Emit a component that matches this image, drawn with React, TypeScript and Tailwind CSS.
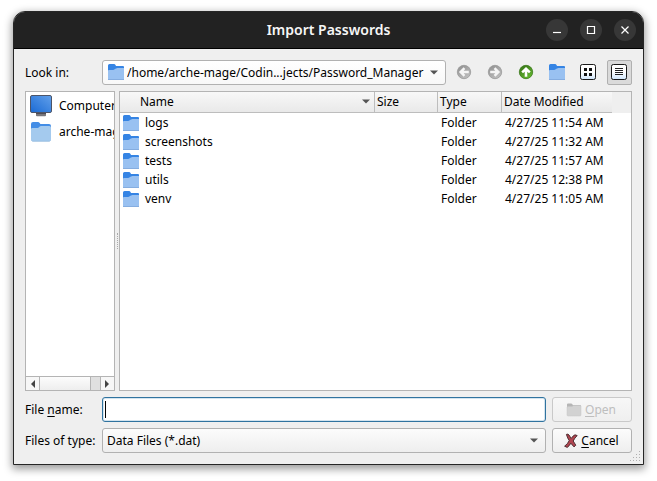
import React from "react";

const files = [
  { name: "logs", type: "Folder", date: "4/27/25 11:54 AM" },
  { name: "screenshots", type: "Folder", date: "4/27/25 11:32 AM" },
  { name: "tests", type: "Folder", date: "4/27/25 11:57 AM" },
  { name: "utils", type: "Folder", date: "4/27/25 12:38 PM" },
  { name: "venv", type: "Folder", date: "4/27/25 11:05 AM" },
];

function FolderIcon({ className = "" }: { className?: string }) {
  return (
    <svg className={`h-4 w-4 shrink-0 ${className}`} viewBox="0 0 16 16" aria-hidden="true">
      <path d="M0 1.5Q0 0 1.5 0H6Q7 0 7.5 1L8 2H15Q16 2 16 3V9H0Z" fill="#3584e4" />
      <path d="M0 6.5Q0 6 1 6H5Q6 6 7 5L8 4.4Q8.5 4 9.5 4H16V16H0Z" fill="#99c1f1" />
      <path d="M0 15.5H16" stroke="#85ade0" />
    </svg>
  );
}

function PlaceFolderIcon() {
  return (
    <svg className="h-[22px] w-[22px] shrink-0" viewBox="0 0 22 22" aria-hidden="true">
      <path d="M1 3Q1 1 3 1H8Q9 1 9.7 2L10.4 3H19Q21 3 21 5V12H1Z" fill="#438de6" />
      <path d="M1 8Q1 7 2.3 7H7.5Q8.5 7 9.2 6.1Q10 5 11 5H19.5Q21 5 21 6.5V18.5Q21 20 19.5 20H2.5Q1 20 1 18.5Z" fill="#a4caee" />
      <path d="M1.5 19.5Q2 20.3 3 20.3H19Q20 20.3 20.5 19.5" fill="none" stroke="#8ab5dc" strokeWidth="0.8" />
    </svg>
  );
}

function ComputerIcon() {
  return (
    <svg className="h-[22px] w-[22px] shrink-0" viewBox="0 0 22 22" aria-hidden="true">
      <defs>
        <linearGradient id="screen" x1="1" y1="0" x2="0" y2="1">
          <stop offset="0" stopColor="#62a0ea" />
          <stop offset="1" stopColor="#1a6ad4" />
        </linearGradient>
      </defs>
      <path d="M6 17.5H16V20.5Q16 21.2 15 21.2H7Q6 21.2 6 20.5Z" fill="#77767b" />
      <path d="M6 17.5H16V19H6Z" fill="#4f4c55" />
      <rect x="0.5" y="0.5" width="21" height="17" rx="1.5" fill="url(#screen)" stroke="#4c5468" />
    </svg>
  );
}

function ArrowIcon({ dir, green = false }: { dir: "left" | "right" | "up"; green?: boolean }) {
  const turn = dir === "left" ? 0 : dir === "up" ? 90 : 180;
  const id = `ball-${dir}`;
  return (
    <svg className="h-4 w-4" viewBox="0 0 16 16" aria-hidden="true">
      <defs>
        <linearGradient id={id} x1="0" y1="0" x2="0.6" y2="1">
          <stop offset="0" stopColor={green ? "#346f16" : "#8d8d8d"} />
          <stop offset="1" stopColor={green ? "#62b52e" : "#bdbdbd"} />
        </linearGradient>
      </defs>
      <circle cx="8" cy="8" r="6.7" fill={`url(#${id})`} stroke={green ? "#3b7a1c" : "#999"} strokeWidth="0.8" />
      <path
        d="M2.9 8L7.6 3.3L9.3 5L7.7 6.7H12.8V9.3H7.7L9.3 11L7.6 12.7Z"
        fill={green ? "#fff" : "#f5f5f5"}
        transform={`rotate(${turn} 8 8)`}
      />
    </svg>
  );
}

function ViewIcon({ kind }: { kind: "list" | "detail" }) {
  const id = `view-${kind}`;
  return (
    <svg className="h-4 w-4" viewBox="0 0 16 16" aria-hidden="true">
      <defs>
        <linearGradient id={id} x1="0" y1="0" x2="0" y2="1">
          <stop offset="0.5" stopColor="#fff" />
          <stop offset="1" stopColor="#cfe5fb" />
        </linearGradient>
      </defs>
      <rect x="0.5" y="0.5" width="15" height="15" rx="1.8" fill={`url(#${id})`} stroke="#1a1a1a" />
      {kind === "list" ? (
        <path d="M4 4H7V7H4ZM9 4H12V7H9ZM4 9H7V12H4ZM9 9H12V12H9Z" fill="#111" />
      ) : (
        <path d="M4 4.5H12M4 6.5H12M4 8.5H12M4 10.5H12" stroke="#222" />
      )}
    </svg>
  );
}

function DownTriangle({ className = "" }: { className?: string }) {
  return (
    <svg className={`h-[5px] w-2 ${className}`} viewBox="0 0 8 5" aria-hidden="true">
      <path d="M0 0.5H8L4 4.5Z" fill="#555" />
    </svg>
  );
}

function ToolButton({ label, active = false, children }: { label: string; active?: boolean; children: React.ReactNode }) {
  return (
    <button
      type="button"
      aria-label={label}
      className={`flex h-[25px] w-[25px] items-center justify-start rounded-[2px] border pb-px pl-[3px] ${
        active ? "border-[#b0b0b0] bg-[#dadada]" : "border-transparent"
      }`}
    >
      {children}
    </button>
  );
}

function WindowButton({ label, d }: { label: string; d: string }) {
  return (
    <button type="button" aria-label={label} className="h-[22px] w-[22px] rounded-full bg-[#373737]">
      <svg className="h-[22px] w-[22px]" viewBox="0 0 22 22" aria-hidden="true">
        <path d={d} fill="none" stroke="#fff" strokeWidth="1.2" />
      </svg>
    </button>
  );
}

const field = "h-[25px] w-full appearance-none rounded-[3px] border";
const raised = "border-[#b1b1b1] bg-linear-to-b from-[#fcfcfc] to-[#eee]";
const head = "border-b border-[#bdbdbd] bg-linear-to-b from-[#f8f8f8] to-[#e9e9e9] p-0 text-left font-normal";

export default function App() {
  return (
    <div className="flex min-h-screen flex-col bg-white px-[13px] pt-[11px] pb-4 font-['Noto_Sans',sans-serif] text-[12px] leading-4 text-black">
      <main className="flex flex-1 flex-col rounded-t-[12px] border border-[#262626] bg-[#efefef] shadow-[0_3px_9px_1px_rgba(0,0,0,0.4)]">
        <header className="grid h-[37px] grid-cols-[1fr_auto_1fr] items-center rounded-t-[11px] border-b border-black bg-[#222] px-[7px]">
          <h1 className="col-start-2 text-[14px] leading-5 font-semibold text-[#f6f6f6]">Import Passwords</h1>
          <div className="flex justify-end gap-3">
            <WindowButton label="Minimize" d="M7 13.5H15" />
            <WindowButton label="Maximize" d="M7.5 7.5H14.5V14.5H7.5Z" />
            <WindowButton label="Close" d="M7.5 7.5L14.5 14.5M14.5 7.5L7.5 14.5" />
          </div>
        </header>

        <form className="relative flex flex-1 flex-col gap-1.5 p-[11px]" onSubmit={(e) => e.preventDefault()}>
          <div className="flex items-center gap-1.5">
            <label htmlFor="look" className="w-[71px] shrink-0">Look in:</label>
            <div className="relative min-w-0 flex-1">
              <select id="look" className={`${field} border-[#b1b1b1] bg-linear-to-b from-white to-[#f8f8f8] pr-5 pl-6`}>
                <option>/home/arche-mage/Codin...jects/Password_Manager</option>
              </select>
              <FolderIcon className="pointer-events-none absolute top-1 left-[6px]" />
              <DownTriangle className="pointer-events-none absolute top-[10px] right-2" />
            </div>
            <ToolButton label="Back"><ArrowIcon dir="left" /></ToolButton>
            <ToolButton label="Forward"><ArrowIcon dir="right" /></ToolButton>
            <ToolButton label="Parent directory"><ArrowIcon dir="up" green /></ToolButton>
            <ToolButton label="Create new folder"><FolderIcon /></ToolButton>
            <ToolButton label="List view"><ViewIcon kind="list" /></ToolButton>
            <ToolButton label="Detail view" active><ViewIcon kind="detail" /></ToolButton>
          </div>

          <div className="flex flex-1">
            <nav className="flex w-[90px] shrink-0 flex-col overflow-hidden border border-[#b4b4b4] bg-white">
              <ul className="flex-1">
                <li className="flex h-[26px] items-center gap-[7px] pt-px pl-1 whitespace-nowrap"><ComputerIcon />Computer</li>
                <li className="flex h-[26px] items-center gap-[7px] pt-px pl-1 whitespace-nowrap"><PlaceFolderIcon />arche-mage</li>
              </ul>
              <div className="flex h-[14px] border-t border-[#b4b4b4] bg-[#e0e0e0]">
                <button type="button" aria-label="Scroll left" className="flex w-[14px] items-center justify-center border-r border-[#b4b4b4] bg-[#f7f7f7]">
                  <svg className="h-2 w-1" viewBox="0 0 4 8"><path d="M4 0V8L0 4Z" fill="#444" /></svg>
                </button>
                <div className="w-[51px] border-r border-[#b4b4b4] bg-linear-to-b from-[#fcfcfc] to-[#eee]" />
                <button type="button" aria-label="Scroll right" className="ml-auto flex w-[14px] items-center justify-center border-l border-[#b4b4b4] bg-[#f7f7f7] pr-px">
                  <svg className="h-2 w-1" viewBox="0 0 4 8"><path d="M0 0V8L4 4Z" fill="#444" /></svg>
                </button>
              </div>
            </nav>
            <div className="flex w-1 items-center justify-center">
              <div className="h-4 border-l border-dotted border-[#aaa]" />
            </div>
            <section className="min-w-0 flex-1 border border-[#b4b4b4] bg-white">
              <table className="w-full table-fixed border-separate border-spacing-0">
                <colgroup>
                  <col />
                  <col className="w-[63px]" />
                  <col className="w-[64px]" />
                  <col className="w-[110px]" />
                  <col className="w-[19px]" />
                </colgroup>
                <thead>
                  <tr className="h-[21px]">
                    <th className={`${head} border-r`}>
                      <div className="flex items-center justify-between pr-1 pl-5">
                        Name
                        <DownTriangle className="mb-0.5" />
                      </div>
                    </th>
                    <th className={`${head} border-r pl-0.5`}>Size</th>
                    <th className={`${head} border-r pl-0.5`}>Type</th>
                    <th className={`${head} pl-0.5`}>Date Modified</th>
                    <td className="bg-[#efefef] p-0" />
                  </tr>
                </thead>
                <tbody>
                  {files.map((f) => (
                    <tr key={f.name} className="h-[19px]">
                      <td className="p-0">
                        <div className="flex items-center gap-1.5 pl-[3px]">
                          <FolderIcon />
                          {f.name}
                        </div>
                      </td>
                      <td className="p-0" />
                      <td className="p-0 pl-[3px]">{f.type}</td>
                      <td className="p-0 pl-[3px] whitespace-nowrap">{f.date}</td>
                      <td className="p-0" />
                    </tr>
                  ))}
                </tbody>
              </table>
            </section>
          </div>

          <div className="flex items-center gap-1.5">
            <label htmlFor="name" className="w-[71px] shrink-0 whitespace-nowrap">
              File <span className="underline underline-offset-2">n</span>ame:
            </label>
            <div className="relative flex-1">
              <input id="name" type="text" className={`${field} border-[#30739f] bg-white px-1 shadow-[inset_0_0_0_1px_#d3e4ef]`} />
              <span className="pointer-events-none absolute top-1 left-[3px] h-[17px] w-px bg-black" />
            </div>
            <button type="submit" disabled className="flex h-[25px] w-20 items-center justify-center gap-[3px] rounded-[3px] border border-[#c9c9c9] bg-linear-to-b from-[#f7f7f7] to-[#efefef] pr-0.5 text-[#bebebe]">
              <svg className="h-4 w-4" viewBox="0 0 16 16" aria-hidden="true">
                <path d="M1 2.5Q1 1.5 2 1.5H5.5L7 3H14Q15 3 15 4V8H1Z" fill="#b5b5b5" />
                <path d="M1 5.5Q1 4.5 2 4.5H6L7.5 3.5H14Q15 3.5 15 4.5V13Q15 14 14 14H2Q1 14 1 13Z" fill="#d2d2d2" stroke="#c5c5c5" strokeWidth="0.5" />
              </svg>
              <span><span className="underline underline-offset-2">O</span>pen</span>
            </button>
          </div>

          <div className="flex items-center gap-1.5">
            <label htmlFor="kind" className="w-[71px] shrink-0 whitespace-nowrap">Files of type:</label>
            <div className="relative flex-1">
              <select id="kind" className={`${field} ${raised} pr-5 pl-1`}>
                <option>Data Files (*.dat)</option>
              </select>
              <DownTriangle className="pointer-events-none absolute top-[10px] right-2" />
            </div>
            <button type="button" className={`flex h-[25px] w-20 items-center justify-center gap-0.5 rounded-[3px] border ${raised} pr-0.5`}>
              <svg className="h-4 w-4" viewBox="0 0 16 16" aria-hidden="true">
                <path
                  d="M3.4 1.4Q5 .6 6 2L8.2 5.4Q10 2.6 12 1.8L14.2 2.6Q11.6 5 10.2 8L12.8 12.2L11 13.9L7.8 10.2Q6.4 13 4.2 14.4L1.6 13.2Q4.8 11 6.2 7.6Q4.6 5.4 3.4 1.4Z"
                  fill="#b04550"
                  stroke="#43262a"
                  strokeWidth="0.9"
                  strokeLinejoin="round"
                />
              </svg>
              <span><span className="underline underline-offset-2">C</span>ancel</span>
            </button>
          </div>

          <svg className="absolute right-0.5 bottom-0.5 h-[11px] w-[11px]" viewBox="0 0 11 11" aria-hidden="true">
            <path
              d="M9 0h1v1h-1zM6 3h1v1H6zM9 3h1v1H9zM3 6h1v1H3zM6 6h1v1H6zM9 6h1v1H9zM0 9h1v1H0zM3 9h1v1H3zM6 9h1v1H6zM9 9h1v1H9z"
              fill="#b0b0b0"
            />
          </svg>
        </form>
      </main>
    </div>
  );
}
